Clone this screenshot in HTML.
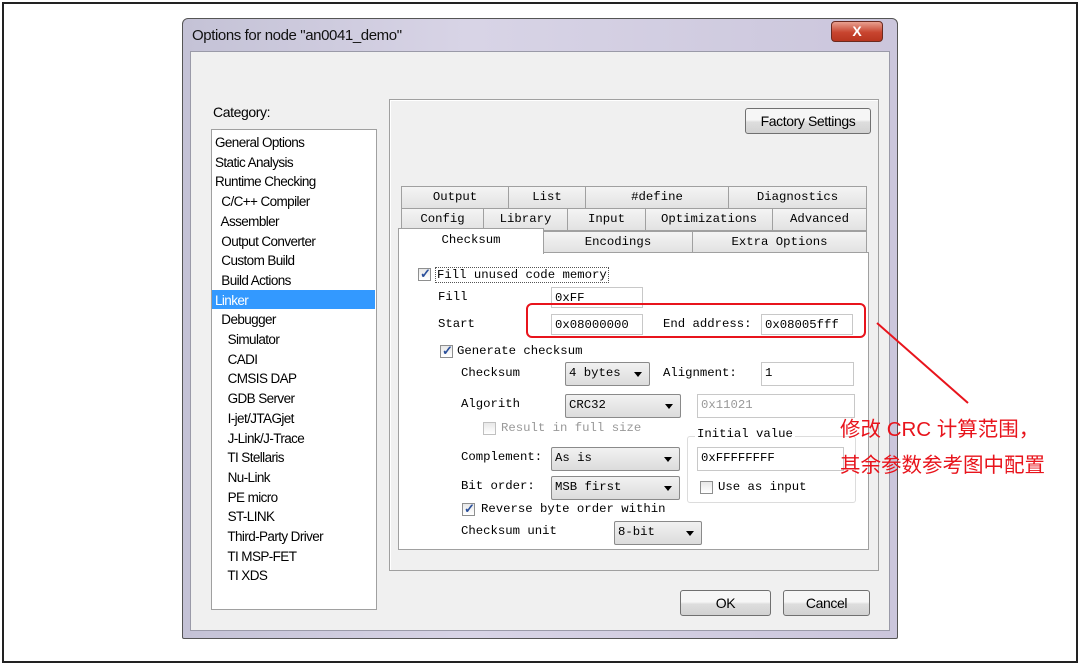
<!DOCTYPE html>
<html><head><meta charset="utf-8"><style>
*{margin:0;padding:0;box-sizing:border-box}
body{width:1080px;height:667px;background:#fff;position:relative;overflow:hidden;font-family:"Liberation Sans",sans-serif;font-size:13px;color:#000}
.a{position:absolute}
.m{font-family:"Liberation Mono",monospace;font-size:12.3px;white-space:nowrap}
.s{font-size:13px;letter-spacing:-0.4px;white-space:nowrap}
.tab{position:absolute;background:linear-gradient(#f4f4f4,#e2e2e2);border:1px solid #a0a0a0;text-align:center;font-family:"Liberation Mono",monospace;font-size:12.3px;line-height:20px}
.fld{position:absolute;background:#fff;border:1px solid #c8c8c8;font-family:"Liberation Mono",monospace;font-size:12.3px;padding-left:3px;line-height:20px}
.sel{position:absolute;background:linear-gradient(#f2f2f2,#dcdcdc);border:1px solid #8a8a8a;border-radius:2px;font-family:"Liberation Mono",monospace;font-size:12.3px;padding-left:3px;line-height:21px}
.sel:after{content:"";position:absolute;right:7px;top:9px;border-left:4px solid transparent;border-right:4px solid transparent;border-top:5px solid #000}
.cb{position:absolute;width:13px;height:13px;border:1px solid #8e8f8f;background:linear-gradient(#e8e8e8,#fff)}
.cb.c:after{content:"✓";position:absolute;left:1px;top:-3px;font-size:13px;color:#2a4f9a;font-weight:bold}
.btn{position:absolute;border:1px solid #707070;border-radius:3px;background:linear-gradient(#f6f6f6 45%,#dddddd 55%,#d2d2d2);text-align:center;font-size:14px;letter-spacing:-0.4px}
</style></head><body>
<div class="a" style="left:2px;top:2px;width:1076px;height:661px;border:2px solid #222"></div>

<div class="a" style="left:182px;top:18px;width:716px;height:621px;background:linear-gradient(90deg,#c4c2d6,#d8d4e6 40%,#cbc6dc);border:1px solid #555;border-radius:6px 6px 2px 2px"></div>
<div class="a s" style="left:192px;top:27px;font-size:15px;color:#111">Options for node "an0041_demo"</div>
<div class="a" style="left:831px;top:21px;width:52px;height:21px;border-radius:4px;background:linear-gradient(#e8a090,#c8452f 55%,#b83520);border:1px solid #6b2a20;color:#fff;text-align:center;font-weight:bold;font-size:14px;line-height:19px">X</div>
<div class="a" style="left:190px;top:51px;width:700px;height:580px;background:#f0f0f0;border:1px solid #9a9aa8"></div>

<div class="a s" style="left:213px;top:104px;font-size:14px">Category:</div>
<div class="a" style="left:211px;top:129px;width:166px;height:481px;background:#fff;border:1px solid #a0a0a0"></div>
<div class="a" style="left:212px;top:290px;width:163px;height:19px;background:#3399ff"></div>
<div class="a s" style="left:215px;top:133px;line-height:19.7px;font-size:13.5px;letter-spacing:-0.6px">
General Options<br>Static Analysis<br>Runtime Checking<br>&nbsp; C/C++ Compiler<br>&nbsp; Assembler<br>&nbsp; Output Converter<br>&nbsp; Custom Build<br>&nbsp; Build Actions<br><span style="color:#fff">Linker</span><br>&nbsp; Debugger<br>&nbsp; &nbsp; Simulator<br>&nbsp; &nbsp; CADI<br>&nbsp; &nbsp; CMSIS DAP<br>&nbsp; &nbsp; GDB Server<br>&nbsp; &nbsp; I-jet/JTAGjet<br>&nbsp; &nbsp; J-Link/J-Trace<br>&nbsp; &nbsp; TI Stellaris<br>&nbsp; &nbsp; Nu-Link<br>&nbsp; &nbsp; PE micro<br>&nbsp; &nbsp; ST-LINK<br>&nbsp; &nbsp; Third-Party Driver<br>&nbsp; &nbsp; TI MSP-FET<br>&nbsp; &nbsp; TI XDS</div>

<div class="a" style="left:389px;top:99px;width:490px;height:472px;border:1px solid #a0a0a0;box-shadow:inset 1px 1px 0 #fff"></div>
<div class="btn" style="left:745px;top:108px;width:126px;height:26px;line-height:24px">Factory Settings</div>

<div class="tab" style="left:401px;top:186px;width:108px;height:23px">Output</div>
<div class="tab" style="left:508px;top:186px;width:78px;height:23px">List</div>
<div class="tab" style="left:585px;top:186px;width:144px;height:23px">#define</div>
<div class="tab" style="left:728px;top:186px;width:139px;height:23px">Diagnostics</div>
<div class="tab" style="left:401px;top:208px;width:83px;height:23px">Config</div>
<div class="tab" style="left:483px;top:208px;width:85px;height:23px">Library</div>
<div class="tab" style="left:567px;top:208px;width:79px;height:23px">Input</div>
<div class="tab" style="left:645px;top:208px;width:128px;height:23px">Optimizations</div>
<div class="tab" style="left:772px;top:208px;width:95px;height:23px">Advanced</div>
<div class="tab" style="left:543px;top:231px;width:150px;height:22px">Encodings</div>
<div class="tab" style="left:692px;top:231px;width:175px;height:22px">Extra Options</div>
<div class="a" style="left:398px;top:252px;width:471px;height:298px;background:#fff;border:1px solid #a0a0a0"></div>
<div class="tab" style="left:398px;top:228px;width:146px;height:26px;background:#fff;border-bottom:none;line-height:22px">Checksum</div>

<div class="cb c" style="left:418px;top:268px"></div>
<div class="a m" style="left:435px;top:267px;border:1px dotted #555;padding:0 1px">Fill unused code memory</div>
<div class="a m" style="left:438px;top:290px">Fill</div>
<div class="fld" style="left:551px;top:287px;width:92px;height:21px">0xFF</div>
<div class="a m" style="left:438px;top:317px">Start</div>
<div class="fld" style="left:551px;top:314px;width:92px;height:21px">0x08000000</div>
<div class="a m" style="left:663px;top:317px">End address:</div>
<div class="fld" style="left:761px;top:314px;width:92px;height:21px">0x08005fff</div>
<div class="a" style="left:526px;top:303px;width:340px;height:35px;border:2.5px solid #e8141c;border-radius:6px"></div>

<div class="cb c" style="left:440px;top:345px"></div>
<div class="a m" style="left:457px;top:344px">Generate checksum</div>
<div class="a m" style="left:461px;top:366px">Checksum</div>
<div class="sel" style="left:565px;top:362px;width:85px;height:24px">4 bytes</div>
<div class="a m" style="left:663px;top:366px">Alignment:</div>
<div class="fld" style="left:761px;top:362px;width:93px;height:24px">1</div>
<div class="a m" style="left:461px;top:397px">Algorith</div>
<div class="sel" style="left:565px;top:394px;width:116px;height:24px">CRC32</div>
<div class="fld" style="left:697px;top:394px;width:158px;height:24px;color:#999">0x11021</div>
<div class="cb" style="left:483px;top:422px;border-color:#c0c0c0"></div>
<div class="a m" style="left:501px;top:421px;color:#999">Result in full size</div>
<div class="a" style="left:687px;top:436px;width:169px;height:67px;border:1px solid #dcdcdc;border-radius:3px"></div>
<div class="a m" style="left:695px;top:427px;background:#fff;padding:0 2px">Initial value</div>
<div class="a m" style="left:461px;top:450px">Complement:</div>
<div class="sel" style="left:551px;top:447px;width:129px;height:24px">As is</div>
<div class="fld" style="left:697px;top:447px;width:147px;height:24px">0xFFFFFFFF</div>
<div class="a m" style="left:461px;top:479px">Bit order:</div>
<div class="sel" style="left:551px;top:476px;width:129px;height:24px">MSB first</div>
<div class="cb" style="left:700px;top:481px"></div>
<div class="a m" style="left:718px;top:480px">Use as input</div>
<div class="cb c" style="left:462px;top:503px"></div>
<div class="a m" style="left:481px;top:502px">Reverse byte order within</div>
<div class="a m" style="left:461px;top:524px">Checksum unit</div>
<div class="sel" style="left:614px;top:521px;width:88px;height:24px">8-bit</div>

<div class="btn" style="left:680px;top:590px;width:91px;height:26px;line-height:24px">OK</div>
<div class="btn" style="left:783px;top:590px;width:87px;height:26px;line-height:24px">Cancel</div>

<svg class="a" style="left:870px;top:315px" width="110" height="100"><line x1="7" y1="8" x2="98" y2="88" stroke="#e8141c" stroke-width="2"/></svg>
<div class="a" style="left:840px;top:412px;color:#e8141c;font-size:20.5px;line-height:36px;font-family:'Liberation Sans','Noto Sans CJK SC',sans-serif;white-space:nowrap">修改 CRC 计算范围，<br>其余参数参考图中配置</div>
</body></html>
